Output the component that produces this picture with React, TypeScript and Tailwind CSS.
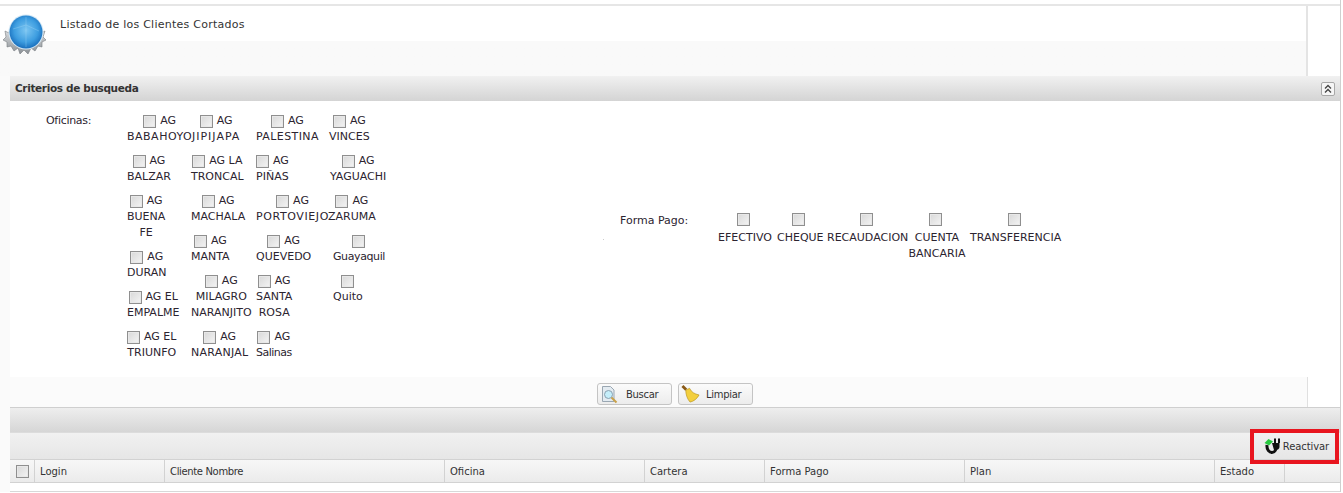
const font = { fontFamily: '"DejaVu Sans", Verdana, sans-serif' };

type Cell = { head?: string; lines: string[]; shift?: string; track?: string };

const oficinas: { width: string; cells: Cell[] }[] = [
  {
    width: "w-[64px]",
    cells: [
      { head: "AG", lines: ["BABAHOYO"], track: "tracking-[0.5px]" },
      { head: "AG", lines: ["BALZAR"] },
      { head: "AG", lines: ["BUENA", "FE"] },
      { head: "AG", lines: ["DURAN"] },
      { head: "AG EL", lines: ["EMPALME"] },
      { head: "AG EL", lines: ["TRIUNFO"] },
    ],
  },
  {
    width: "w-[65px]",
    cells: [
      { head: "AG", lines: ["JIPIJAPA"], shift: "ml-[1px]", track: "tracking-[1px]" },
      { head: "AG LA", lines: ["TRONCAL"] },
      { head: "AG", lines: ["MACHALA"] },
      { head: "AG", lines: ["MANTA"] },
      { head: "AG", lines: ["MILAGRO", "NARANJITO"] },
      { head: "AG", lines: ["NARANJAL"], track: "tracking-[0.25px]" },
    ],
  },
  {
    width: "w-[73px]",
    cells: [
      { head: "AG", lines: ["PALESTINA"], track: "tracking-[0.4px]" },
      { head: "AG", lines: ["PIÑAS"] },
      { head: "AG", lines: ["PORTOVIEJO"], track: "tracking-[0.6px]" },
      { head: "AG", lines: ["QUEVEDO"] },
      { head: "AG", lines: ["SANTA", "ROSA"] },
      { head: "AG", lines: ["Salinas"], track: "tracking-[-0.5px]" },
    ],
  },
  {
    width: "w-[70px]",
    cells: [
      { head: "AG", lines: ["VINCES"] },
      { head: "AG", lines: ["YAGUACHI"], shift: "ml-[1px]" },
      { head: "AG", lines: ["ZARUMA"], shift: "-ml-[1px]" },
      { lines: ["Guayaquil"], shift: "ml-[4px]", track: "tracking-[-0.4px]" },
      { lines: ["Quito"], shift: "ml-[4px]" },
    ],
  },
];

const pagos: { lines: string[]; width: string }[] = [
  { lines: ["EFECTIVO"], width: "w-[60px] pr-[4px]" },
  { lines: ["CHEQUE"], width: "w-[50px] pr-[4px]" },
  { lines: ["RECAUDACION"], width: "w-[81px]" },
  { lines: ["CUENTA", "BANCARIA"], width: "w-[62px] pr-[4px]" },
  { lines: ["TRANSFERENCIA"], width: "w-[91px]" },
];

const columnas = [
  { label: "Login", width: "w-[130px]" },
  { label: "Cliente Nombre", width: "w-[280px]", track: "tracking-[-0.35px]" },
  { label: "Oficina", width: "w-[200px]" },
  { label: "Cartera", width: "w-[120px]" },
  { label: "Forma Pago", width: "w-[200px]" },
  { label: "Plan", width: "w-[250px]" },
  { label: "Estado", width: "w-[70px]" },
];

const Check = () => (
  <span className="inline-block h-[13px] w-[13px] shrink-0 border border-[#8f8f8f] bg-gradient-to-br from-[#d8d8d8] to-[#f4f4f4] shadow-[inset_0_0_0_1px_#e8e8e8]" />
);

const GlobeIcon = () => (
  <svg width="46" height="48" viewBox="0 0 46 48">
    <defs>
      <radialGradient id="globe" cx="50%" cy="45%" r="55%">
        <stop offset="0%" stopColor="#7cc6f2" />
        <stop offset="65%" stopColor="#3d9de0" />
        <stop offset="100%" stopColor="#1a6fbd" />
      </radialGradient>
      <linearGradient id="gear" x1="0" y1="0" x2="0" y2="1">
        <stop offset="0%" stopColor="#e8eaec" />
        <stop offset="100%" stopColor="#8b9095" />
      </linearGradient>
    </defs>
    {/* engranaje */}
    <path
      d="M3 21L7 23L8 18L12 20L23 16L34 20L38 18L39 23L43 21L41 27L44 30L40 32L40 37L36 36L33 41L29 38L26 44L22 40L18 44L16 38L12 41L9 36L5 37L5 32L1 30L4 27Z"
      fill="url(#gear)"
      stroke="#777c81"
      strokeWidth="0.6"
    />
    <circle cx="24" cy="22" r="17.5" fill="#d5e9f6" />
    <circle cx="24" cy="22" r="16.5" fill="url(#globe)" />
    <path d="M11 19 L24 15 L37 21 M24 7 V37" stroke="#b3e0f9" strokeWidth="0.5" fill="none" opacity="0.6" />
  </svg>
);

const BuscarIcon = () => (
  <svg width="17" height="19" viewBox="0 0 17 19">
    <path d="M1.5 1.5H9.5L13 5V16.5H1.5Z" fill="#e3ebf1" stroke="#9aa7b2" />
    <circle cx="7.5" cy="9.5" r="4" fill="#c4eefa" stroke="#8aa0b0" />
    <path d="M10.5 12.5L15.5 17.5" stroke="#c9a14a" strokeWidth="2" />
  </svg>
);

const LimpiarIcon = () => (
  <svg width="20" height="20" viewBox="0 0 20 20">
    <path d="M1.5 1.5L5.5 5.5" stroke="#8a5a18" strokeWidth="3" />
    <path d="M5 6L9 4C11 8 14 10 19 11C17 15 13 18 9.5 18.5C6.5 15 5 10.5 5 6Z" fill="#f3cf3e" stroke="#b8941f" strokeWidth="0.7" />
  </svg>
);

const PlugIcon = () => (
  <svg width="18" height="18" viewBox="0 0 18 18">
    <path d="M3 8C2.5 13 5.5 15.5 8 15.5C11 15.5 12.5 12 12.5 8" fill="none" stroke="#111" strokeWidth="3" />
    <path d="M8 6H15.5V10C15.5 12 13.5 13 12 13H10Z" fill="#111" />
    <path d="M11 1.5V6M15 1.5V6" stroke="#111" strokeWidth="2" />
    <path d="M0.5 6L4.5 2L9 4.5L5 8.5Z" fill="#27c93f" />
  </svg>
);

const Collapse = () => (
  <span className="flex h-[14px] w-[14px] items-center justify-center rounded-[2px] border border-[#a8a8a8] bg-[#f6f6f6]">
    <svg width="10" height="10" viewBox="0 0 10 10" fill="none" stroke="#444" strokeWidth="1.3">
      <path d="M2 4.5L5 1.5L8 4.5M2 8.5L5 5.5L8 8.5" />
    </svg>
  </span>
);

const Boton = ({ icon, label, pad }: { icon: React.ReactNode; label: string; pad: string }) => (
  <button className="flex h-[22px] w-[75px] items-center rounded-[3px] border border-[#c4c4c4] bg-gradient-to-b from-[#fbfbfb] to-[#ececec] pl-[2px] text-[10px] tracking-[-0.3px] text-[#333]">
    <span className="flex w-[19px] justify-center">{icon}</span>
    <span className={pad}>{label}</span>
  </button>
);

const App = () => {
  return (
    <div className="h-[493px] w-[1343px] overflow-hidden bg-white text-[#2c2430]" style={font}>
      <div className="w-[1341px] border-r border-[#cfcfcf]">
        <div className="pt-[4px]">
          <div className="h-[2px] bg-[#e6e6e6]" />
        </div>

        {/* Encabezado */}
        <div className="h-[70px] w-[1308px] border-r-2 border-[#e4e4e4] bg-gradient-to-b from-white from-50% to-[#f9f9f9] to-50%">
          <div className="flex">
            <div className="ml-[2px] mt-[4px]">
              <GlobeIcon />
            </div>
            <span className="ml-[12px] mt-[11px] text-[11px] leading-[16px] tracking-[0.25px] text-[#333]">
              Listado de los Clientes Cortados
            </span>
          </div>
        </div>

        <div className="bg-[#fafafa] pl-[10px]">
          {/* Criterios */}
          <div className="flex h-[25px] items-center justify-between bg-gradient-to-b from-[#f1f1f1] to-[#d4d4d4] pl-[5px] pr-[5px]">
            <span className="text-[10.5px] font-bold tracking-[-0.35px] text-[#333]">Criterios de busqueda</span>
            <Collapse />
          </div>

          <div className="flex h-[276px] bg-white text-[11px] leading-[16px]">
            <div className="flex w-[593px] pt-[12px]">
              <span className="ml-[36px] w-[81px] shrink-0 tracking-[-0.3px]">Oficinas:</span>
              <div className="flex">
                {oficinas.map((col, i) => (
                  <div key={i} className={`flex flex-col gap-[8px] ${col.width}`}>
                    {col.cells.map((cell, j) => (
                      <div key={j} className={`w-fit whitespace-nowrap text-center ${cell.shift ?? ""}`}>
                        <div className="flex h-[16px] items-center justify-center gap-[4px]">
                          <Check />
                          {cell.head && <span>{cell.head}</span>}
                        </div>
                        {cell.lines.map((line) => (
                          <div key={line} className={cell.track}>
                            {line}
                          </div>
                        ))}
                      </div>
                    ))}
                  </div>
                ))}
              </div>
            </div>

            <div className="flex items-center pb-[4px]">
              <span className="mt-[4px] h-px w-px bg-[#cccccc]" />
              <div className="flex">
                <span className="ml-[16px] w-[97px] pt-[1px]">Forma Pago:</span>
                <div className="flex">
                  {pagos.map((pago) => (
                    <div key={pago.lines[0]} className={`text-center ${pago.width}`}>
                      <div className="flex h-[18px] items-start justify-center pr-[3px] pt-[1px]">
                        <Check />
                      </div>
                      {pago.lines.map((line) => (
                        <div key={line} className="whitespace-nowrap">
                          {line}
                        </div>
                      ))}
                    </div>
                  ))}
                </div>
              </div>
            </div>
          </div>

          {/* Botones */}
          <div className="flex h-[30px] items-center justify-center gap-[6px] bg-[linear-gradient(to_right,#fbfbfb_1297px,#e0e0e0_1297px,#e0e0e0_1298px,#ffffff_1298px)] pt-[4px]">
            <Boton icon={<BuscarIcon />} label="Buscar" pad="ml-[7px]" />
            <Boton icon={<LimpiarIcon />} label="Limpiar" pad="ml-[6px]" />
          </div>

          {/* Grilla */}
          <div className="relative border-t border-[#cfcfcf]">
            <div className="h-[24px] bg-gradient-to-b from-[#eeeeee] to-[#d6d6d6]" />
            <div className="flex h-[27px] items-center justify-end bg-gradient-to-b from-[#f1f1f1] to-[#e6e6e6] border-t border-[#dcdcdc]">
              <div className="flex items-center gap-[1px] pr-[11px] text-[10px] tracking-[-0.1px] text-[#333]">
                <PlugIcon />
                <span>Reactivar</span>
              </div>
            </div>
            <div className="flex h-[24px] border-y border-[#d2d2d2] bg-gradient-to-b from-[#f7f7f7] to-[#ebebeb] text-[10px] leading-[24px] text-[#333]">
              <div className="flex w-[25px] items-center justify-center border-r border-[#d2d2d2] pl-[1px]">
                <Check />
              </div>
              {columnas.map((col) => (
                <div key={col.label} className={`${col.width} border-r border-[#d2d2d2] pl-[5px] ${col.track ?? ""}`}>
                  {col.label}
                </div>
              ))}
            </div>
            <div className="h-[9px] border-b border-[#d8d8d8] bg-white" />
            <div className="absolute left-[1240px] top-[21px] h-[35px] w-[89px] border-[4px] border-[#e8151f]" />
          </div>
        </div>
      </div>
    </div>
  );
};

export default App;
